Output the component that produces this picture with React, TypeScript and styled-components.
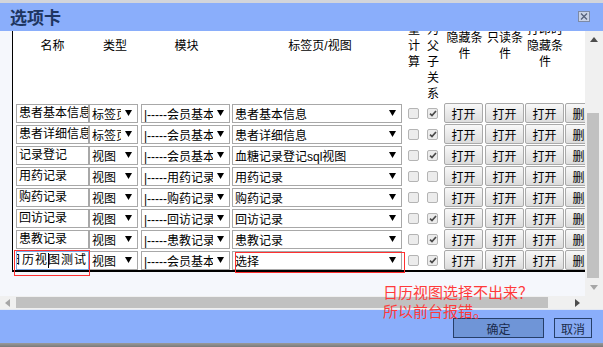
import React from 'react';
import styled, {createGlobalStyle} from 'styled-components';

const FONT = `"Liberation Sans", "Noto Sans CJK SC", sans-serif`;
const COLS = '73px 52px 91px 176px 19px 17px 41px 40px 40px 40px';

const GlobalStyle = createGlobalStyle`
	html, body {
		margin: 0;
		padding: 0;
	}

	body {
		font-family: ${FONT};
		font-size: 12px;
		color: #000;
		background: #fff;
	}
`;

const Dialog = styled.div`
	position: relative;
	display: flex;
	flex-direction: column;
	width: 603px;
	height: 347px;
	box-sizing: border-box;
	border-top: 3px solid #d2d5db;
	overflow: hidden;
`;

const TitleBar = styled.div`
	display: flex;
	align-items: center;
	justify-content: space-between;
	height: 28px;
	flex: none;
	padding: 0 13px 0 10px;
	background: #8aaefb;
`;

const Title = styled.span`
	margin-top: 3px;
	font-size: 17px;
	font-weight: bold;
	line-height: 20px;
	color: #1e3560;
`;

const CloseBox = styled.span`
	display: flex;
	align-items: center;
	justify-content: center;
	box-sizing: border-box;
	width: 12px;
	height: 11px;
	margin-top: -2px;
	border: 1px solid #7c8aa6;
	background: #c9d2e6;
`;

const Body = styled.div`
	display: flex;
	height: 265px;
	flex: none;
`;

const Viewport = styled.div`
	width: 585px;
	flex: none;
	box-sizing: border-box;
	padding-left: 12px;
	overflow: hidden;
	background: #f5f7fc;
`;

const Table = styled.div`
	margin-top: -41px;
	padding: 0 0 1px 3px;
	background: #fff;
	border-left: 1px solid #000;
	border-bottom: 2px solid #000;
`;

const HeaderRow = styled.div`
	display: grid;
	grid-template-columns: ${COLS};
	height: 112px;
	align-items: center;
	line-height: 16px;
`;

const HeadCell = styled.div`
	justify-self: center;
	text-align: center;
	white-space: nowrap;
`;

const WrapHead = styled.div`
	justify-self: center;
	width: 38px;
	text-align: center;
`;

const VertHead = styled.div`
	justify-self: start;
	width: 12px;
	word-break: break-all;
`;

const Rows = styled.div`
	display: flex;
	flex-direction: column;
	gap: 2px;
	padding-top: 1px;
`;

const Row = styled.div`
	display: grid;
	grid-template-columns: ${COLS};
	height: 19px;
	align-items: center;
`;

const TextBox = styled.div<{$focused?: boolean}>`
	box-sizing: border-box;
	width: 73px;
	height: 19px;
	padding-left: 2px;
	border: 1px solid ${p => (p.$focused ? '#7ba6e3' : '#a8a8a8')};
	background: #fff;
	line-height: 17px;
	white-space: nowrap;
	overflow: hidden;
`;

const ScrolledText = styled.span`
	display: inline-block;
	margin-left: -10px;
	letter-spacing: 1px;
`;

const Caret = styled.span`
	display: inline-block;
	width: 0;
	height: 15px;
	margin-right: -1px;
	border-left: 1px solid #000;
	vertical-align: middle;
`;

const SelectBox = styled.div<{$w: number}>`
	display: flex;
	align-items: center;
	gap: 4px;
	box-sizing: border-box;
	width: ${p => p.$w}px;
	height: 19px;
	padding: 0 5px 0 2px;
	border: 1px solid #a8a8a8;
	background: #fff;
`;

const SelectText = styled.span`
	flex: 1;
	min-width: 0;
	overflow: hidden;
	white-space: nowrap;
`;

const CheckBox = styled.span`
	display: flex;
	align-items: center;
	justify-content: center;
	box-sizing: border-box;
	width: 11px;
	height: 11px;
	border: 1px solid #b4b4b4;
	border-radius: 2px;
	background: #ececec;
`;

const OpenButton = styled.button`
	box-sizing: border-box;
	width: 39px;
	height: 20px;
	padding: 0;
	border: 1px solid #a9a9a9;
	border-radius: 2px;
	background: linear-gradient(#f8f8f8, #dcdcdc);
	font: 12px ${FONT};
	color: #000;
	white-space: nowrap;
	overflow: hidden;
`;

const VBar = styled.div`
	display: flex;
	flex-direction: column;
	width: 18px;
	background: #f0f0f0;
`;

const ArrowButton = styled.div<{$w?: number}>`
	display: flex;
	align-items: center;
	justify-content: center;
	flex: none;
	width: ${p => (p.$w ? `${p.$w}px` : 'auto')};
	height: ${p => (p.$w ? 'auto' : '17px')};
`;

const VTrack = styled.div`
	flex: 1;
`;

const VThumb = styled.div`
	width: 12px;
	height: 165px;
	margin: 65px 0 0 2px;
	background: #c1c1c1;
`;

const HBar = styled.div`
	display: flex;
	height: 13px;
	flex: none;
	background: #f0f0f0;
`;

const HTrack = styled.div`
	display: flex;
	align-items: center;
	width: 585px;
	flex: none;
`;

const HThumb = styled.div`
	width: 532px;
	height: 11px;
	margin-left: 1px;
	background: #c1c1c1;
`;

const Spacer = styled.div`
	flex: 1;
`;

const Separator = styled.div`
	height: 1px;
	flex: none;
	background: #e3e8f3;
`;

const Footer = styled.div`
	display: flex;
	justify-content: flex-end;
	align-items: flex-start;
	gap: 10px;
	box-sizing: border-box;
	height: 33px;
	flex: none;
	padding: 8px 11px 0 0;
	background: #8aaefb;
`;

const DialogButton = styled.button<{$primary?: boolean}>`
	box-sizing: border-box;
	width: ${p => (p.$primary ? '91px' : '38px')};
	height: 20px;
	padding: 0;
	border: 1px solid #263f69;
	background: ${p => (p.$primary ? '#6f95d7' : '#88abf4')};
	font: 12px ${FONT};
	color: #1a2b4c;
`;

const BottomEdge = styled.div`
	height: 4px;
	flex: none;
	background: linear-gradient(#9a9a9a, #7a7a7a);
`;

const Note = styled.div`
	position: absolute;
	left: 383px;
	top: 280px;
	font-size: 15px;
	line-height: 19px;
	color: #ff3a3a;
	white-space: nowrap;
`;

const Mark = styled.div<{$x: number; $y: number; $w: number; $h: number}>`
	position: absolute;
	left: ${p => p.$x}px;
	top: ${p => p.$y}px;
	width: ${p => p.$w}px;
	height: ${p => p.$h}px;
	box-sizing: border-box;
	border: 1px solid #ff3030;
`;

const Arrow = ({dir, color}: {dir: 'up' | 'down' | 'left' | 'right'; color: string}) => {
	const paths = {
		up: 'M0 5L4 0L8 5Z',
		down: 'M0 0L8 0L4 5Z',
		left: 'M5 0L5 8L0 4Z',
		right: 'M0 0L5 4L0 8Z',
	};
	const vertical = dir === 'up' || dir === 'down';
	return (
		<svg width={vertical ? 8 : 5} height={vertical ? 5 : 8} viewBox={vertical ? '0 0 8 5' : '0 0 5 8'}>
			<path d={paths[dir]} fill={color} />
		</svg>
	);
};

const Select = ({w, text}: {w: number; text: string}) => (
	<SelectBox $w={w}>
		<SelectText>{text}</SelectText>
		<svg width="7" height="6" viewBox="0 0 7 6">
			<path d="M0 0H7L3.5 6Z" fill="#000" />
		</svg>
	</SelectBox>
);

const Check = ({on}: {on: boolean}) => (
	<CheckBox>
		{on && (
			<svg width="8" height="7" viewBox="0 0 8 7">
				<path d="M1 3.6L3 5.6L7 1" stroke="#4a4a4a" strokeWidth="1.7" fill="none" />
			</svg>
		)}
	</CheckBox>
);

type Item = {
	name: string;
	type: string;
	module: string;
	view: string;
	parent: boolean;
};

const ITEMS: Item[] = [
	{name: '患者基本信息', type: '标签页', module: '|-----会员基本', view: '患者基本信息', parent: true},
	{name: '患者详细信息', type: '标签页', module: '|-----会员基本', view: '患者详细信息', parent: true},
	{name: '记录登记', type: '视图', module: '|-----会员基本', view: '血糖记录登记sql视图', parent: true},
	{name: '用药记录', type: '视图', module: '|-----用药记录', view: '用药记录', parent: false},
	{name: '购药记录', type: '视图', module: '|-----购药记录', view: '购药记录', parent: false},
	{name: '回访记录', type: '视图', module: '|-----回访记录', view: '回访记录', parent: true},
	{name: '患教记录', type: '视图', module: '|-----患教记录', view: '患教记录', parent: true},
	{name: '日历视图测试', type: '视图', module: '|-----会员基本', view: '选择', parent: true},
];

const App = () => {
	const last = ITEMS.length - 1;

	return (
		<Dialog>
			<GlobalStyle />
			<TitleBar>
				<Title>选项卡</Title>
				<CloseBox>
					<svg width="8" height="7" viewBox="0 0 8 7">
						<path d="M1 0.5L7 6.5M7 0.5L1 6.5" stroke="#55607a" strokeWidth="1.3" />
					</svg>
				</CloseBox>
			</TitleBar>
			<Body>
				<Viewport>
					<Table>
						<HeaderRow>
							<HeadCell>名称</HeadCell>
							<HeadCell>类型</HeadCell>
							<HeadCell>模块</HeadCell>
							<HeadCell>标签页/视图</HeadCell>
							<VertHead>量计算</VertHead>
							<VertHead>是否为父子关系</VertHead>
							<WrapHead>隐藏条件</WrapHead>
							<WrapHead>只读条件</WrapHead>
							<WrapHead>打印时隐藏条件</WrapHead>
							<div />
						</HeaderRow>
						<Rows>
							{ITEMS.map((item, i) => (
								<Row key={i}>
									{i === last ? (
										<TextBox $focused>
											<ScrolledText>
												日历视<Caret />图测试
											</ScrolledText>
										</TextBox>
									) : (
										<TextBox>{item.name}</TextBox>
									)}
									<Select w={49} text={item.type} />
									<Select w={89} text={item.module} />
									<Select w={170} text={item.view} />
									<Check on={false} />
									<Check on={item.parent} />
									<OpenButton>打开</OpenButton>
									<OpenButton>打开</OpenButton>
									<OpenButton>打开</OpenButton>
									<OpenButton>删除</OpenButton>
								</Row>
							))}
						</Rows>
					</Table>
				</Viewport>
				<VBar>
					<ArrowButton>
						<Arrow dir="up" color="#4d4d4d" />
					</ArrowButton>
					<VTrack>
						<VThumb />
					</VTrack>
					<ArrowButton>
						<Arrow dir="down" color="#a6a6a6" />
					</ArrowButton>
				</VBar>
			</Body>
			<HBar>
				<HTrack>
					<ArrowButton $w={15}>
						<Arrow dir="left" color="#a6a6a6" />
					</ArrowButton>
					<HThumb />
					<Spacer />
					<ArrowButton $w={15}>
						<Arrow dir="right" color="#4d4d4d" />
					</ArrowButton>
				</HTrack>
			</HBar>
			<Separator />
			<Footer>
				<DialogButton $primary>确定</DialogButton>
				<DialogButton>取消</DialogButton>
			</Footer>
			<BottomEdge />

			<Mark $x={14} $y={247} $w={76} $h={26} />
			<Mark $x={235} $y={249} $w={170} $h={21} />
			<Note>
				日历视图选择不出来？
				<br />
				所以前台报错。
			</Note>
		</Dialog>
	);
};

export default App;
